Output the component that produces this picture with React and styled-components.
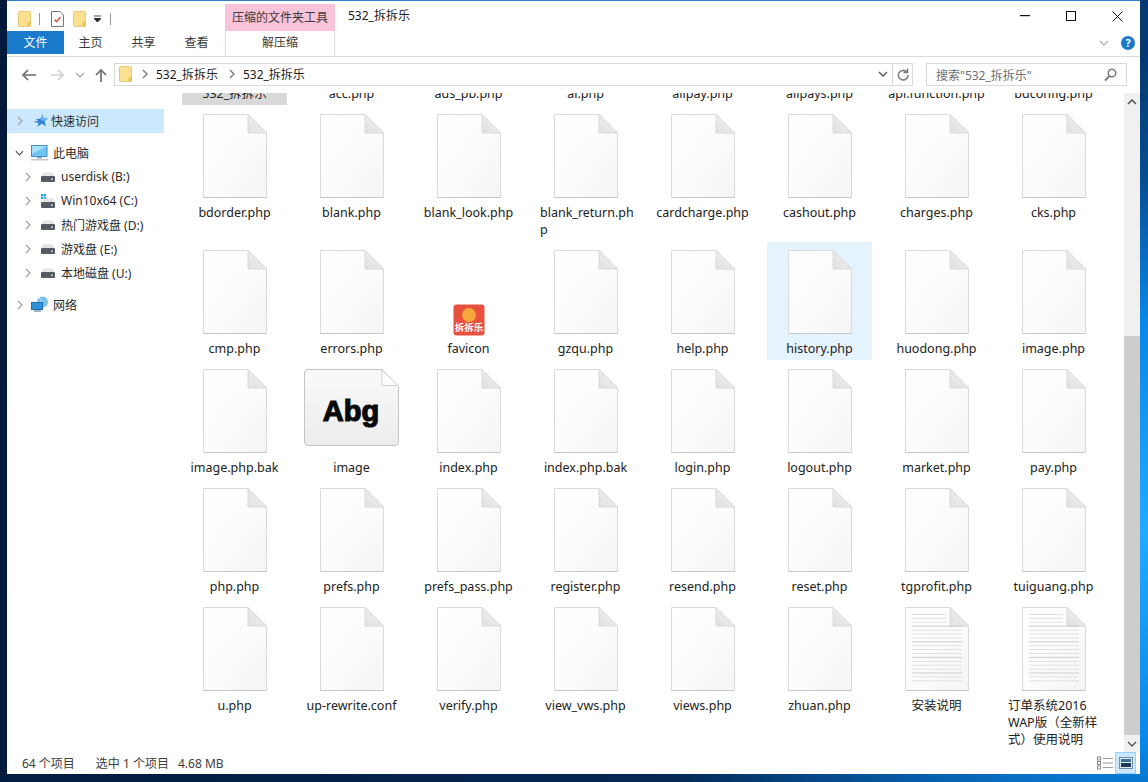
import React from "react";
import styled, { createGlobalStyle } from "styled-components";

const FONT = `"Noto Sans", "Noto Sans CJK SC", sans-serif`;

const Global = createGlobalStyle`
  html, body { margin: 0; padding: 0; width: 1148px; height: 782px; overflow: hidden; }
  * { box-sizing: border-box; }
  body { font-family: ${FONT}; font-size: 12px; color: #1e1e1e; }
`;

const Desktop = styled.div`
  width: 1148px;
  height: 782px;
  padding: 0 8px 8px 7px;
  background:
    radial-gradient(ellipse 560px 470px at 100% 68%, #22aaff 0%, #0a86e6 45%, rgba(6, 80, 150, 0.9) 75%, rgba(4, 40, 80, 0) 100%),
    linear-gradient(100deg, #03193a 0%, #042a55 70%, #06417f 100%);
`;
const Win = styled.div`
  width: 1133px;
  height: 774px;
  background: #fff;
  border-top: 1px solid #2b7cc0;
  display: flex;
  flex-direction: column;
`;
const TitleBar = styled.div`
  height: 30px;
  display: flex;
  align-items: flex-start;
  position: relative;
`;
const Quick = styled.div`
  width: 218px;
  padding: 5px 0 0 11px;
  display: flex;
  align-items: center;
  height: 30px;
`;
const QSep = styled.span`
  width: 1px;
  height: 12px;
  background: #9a9a9a;
  margin: 0 ${(p) => p.$r || 11}px 0 ${(p) => p.$l || 8}px;
`;
const QGap = styled.span`
  width: ${(p) => p.$w}px;
`;
const ContextTitle = styled.div`
  margin-top: 3px;
  width: 110px;
  height: 27px;
  background: #f9c3da;
  color: #3b3b3b;
  font-size: 12px;
  text-align: center;
  line-height: 27px;
`;
const WinTitle = styled.div`
  margin-left: 13px;
  line-height: 30px;
  font-size: 12px;
  flex: 1;
  color: #1a1a1a;
`;
const Caps = styled.div`
  display: flex;
`;
const Cap = styled.div`
  width: 46px;
  height: 30px;
  display: flex;
  align-items: center;
  justify-content: center;
`;
const Tabs = styled.div`
  height: 26px;
  display: flex;
  align-items: flex-start;
  border-bottom: 1px solid #dadbdc;
`;
const FileTab = styled.div`
  width: 57px;
  height: 23px;
  background: #1979ca;
  color: #fff;
  text-align: center;
  line-height: 23px;
`;
const Tab = styled.div`
  width: ${(p) => p.$w}px;
  height: 23px;
  line-height: 23px;
  text-align: center;
  color: #3a3a3a;
`;
const CtxTab = styled.div`
  margin-left: 2px;
  width: 110px;
  height: 25px;
  line-height: 23px;
  text-align: center;
  color: #3a3a3a;
  border-left: 1px solid #dadbdc;
  border-right: 1px solid #dadbdc;
`;
const RibbonRight = styled.div`
  margin-left: auto;
  height: 23px;
  display: flex;
  align-items: center;
  gap: 12px;
  padding-right: 5px;
`;
const HelpDot = styled.div`
  width: 14px;
  height: 14px;
  border-radius: 50%;
  background: #1979ca;
  color: #fff;
  font-weight: 700;
  font-size: 11px;
  line-height: 14px;
  text-align: center;
`;
const NavBar = styled.div`
  height: 36px;
  display: flex;
  align-items: flex-start;
  padding-top: 6px;
`;
const NavButtons = styled.div`
  width: 107px;
  height: 23px;
  padding-left: 13px;
  display: flex;
  align-items: center;
`;
const NavGap = styled.span`
  width: ${(p) => p.$w}px;
`;
const AddressBox = styled.div`
  width: 799px;
  height: 23px;
  border: 1px solid #d9d9d9;
  display: flex;
  align-items: center;
  padding-left: 4px;
  padding-bottom: 1px;
`;
const CrumbSep = styled.span`
  margin-left: ${(p) => p.$l}px;
  display: inline-flex;
  align-items: center;
`;
const Crumb = styled.span`
  margin-left: 8px;
  font-size: 12px;
  color: #1a1a1a;
`;
const AddrEnd = styled.div`
  margin-left: auto;
  display: flex;
  align-items: center;
  height: 21px;
`;
const AddrBtn = styled.div`
  width: ${(p) => p.$w}px;
  height: 21px;
  display: flex;
  align-items: center;
  justify-content: center;
  border-left: ${(p) => (p.$sep ? "1px solid #d9d9d9" : "none")};
`;
const SearchBox = styled.div`
  margin-left: 13px;
  width: 201px;
  height: 23px;
  border: 1px solid #d9d9d9;
  display: flex;
  align-items: center;
  justify-content: space-between;
  padding: 0 9px;
  color: #6d6d6d;
`;
const Body = styled.div`
  flex: 1;
  display: flex;
  min-height: 0;
`;
const Side = styled.div`
  width: 157px;
  flex: none;
  padding-top: 16px;
  display: flex;
  flex-direction: column;
`;
const SideRow = styled.div`
  height: 24px;
  display: flex;
  align-items: center;
  padding-left: ${(p) => p.$indent}px;
  padding-bottom: 1px;
  background: ${(p) => (p.$on ? "#cce8ff" : "transparent")};
  margin-top: ${(p) => p.$mt || 0}px;
  color: #2a2a2a;
  font-size: 12px;
  white-space: nowrap;
`;
const Chev = styled.span`
  width: 9px;
  margin-right: ${(p) => p.$mr}px;
  display: inline-flex;
  justify-content: center;
`;
const SideIcon = styled.span`
  width: ${(p) => p.$w || 16}px;
  height: 16px;
  margin-right: ${(p) => p.$mr || 5}px;
  display: inline-flex;
  align-items: center;
  justify-content: center;
`;
const Main = styled.div`
  flex: 1;
  position: relative;
  overflow: hidden;
  padding-left: 18px;
`;
const Grid = styled.div`
  margin-top: -106px;
  display: grid;
  grid-template-columns: repeat(8, 105px);
  column-gap: 12px;
  row-gap: 1px;
  align-items: start;
`;
const Cell = styled.div`
  min-height: 118px;
  padding: 8px 0 3px;
  display: flex;
  flex-direction: column;
  align-items: center;
  background: ${(p) => (p.$sel === "blue" ? "#e5f3ff" : p.$sel === "gray" ? "#d9d9d9" : "transparent")};
`;
const IconBox = styled.div`
  height: 84px;
  width: 100%;
  display: flex;
  align-items: ${(p) => p.$align || "flex-end"};
  justify-content: center;
`;
const Label = styled.div`
  margin-top: 6px;
  width: 100%;
  font-size: 12.5px;
  line-height: 17px;
  color: #222;
  text-align: ${(p) => (p.$left ? "left" : "center")};
  padding-left: ${(p) => (p.$left ? 7 : 0)}px;
  white-space: nowrap;
`;
const Line = styled.div``;
const ScrollBar = styled.div`
  position: absolute;
  right: 0;
  top: 0;
  bottom: 0;
  width: 16px;
  background: #f0f0f0;
  display: flex;
  flex-direction: column;
`;
const ScrollArrow = styled.div`
  height: 17px;
  display: flex;
  align-items: center;
  justify-content: center;
`;
const ScrollTrack = styled.div`
  flex: 1;
  display: flex;
  flex-direction: column;
  justify-content: flex-end;
`;
const ScrollThumb = styled.div`
  height: 399px;
  background: #cdcdcd;
`;
const Status = styled.div`
  height: 22px;
  flex: none;
  display: flex;
  align-items: center;
  padding-left: 15px;
  color: #3e3e3e;
  font-size: 12px;
`;
const StatusPart = styled.span`
  margin-right: ${(p) => p.$mr}px;
`;
const Views = styled.div`
  margin-left: auto;
  display: flex;
  align-items: center;
  height: 22px;
  padding-right: 4px;
`;
const ViewBtn = styled.div`
  width: 21px;
  height: 22px;
  display: flex;
  align-items: center;
  justify-content: center;
  background: ${(p) => (p.$on ? "#cce8ff" : "transparent")};
  border: ${(p) => (p.$on ? "1px solid #99d1ff" : "none")};
`;

const Folder = () => (
  <svg width="13" height="16" viewBox="0 0 13 16">
    <rect x=".5" y=".5" width="12" height="15" rx="1.2" fill="#fbe08f" stroke="#e6c976" />
    <rect x="9.500" y="11" width="3" height="4.500" fill="#eec256" />
  </svg>
);
const Notes = () => (
  <svg width="13" height="16" viewBox="0 0 13 16">
    <path d="M.5.5h8.500l3.500 3.500v11.500H.5z" fill="#fff" stroke="#777" />
    <path d="M3.500 8.500l2 2.200 4-4.700" fill="none" stroke="#d4562a" strokeWidth="1.400" />
  </svg>
);
const ChevR = ({ c = "#a6a6a6" }) => (
  <svg width="6" height="10" viewBox="0 0 6 10"><path d="M1 1l4 4-4 4" fill="none" stroke={c} strokeWidth="1.300" /></svg>
);
const ChevD = ({ c = "#555" }) => (
  <svg width="10" height="6" viewBox="0 0 10 6"><path d="M1 1l4 4 4-4" fill="none" stroke={c} strokeWidth="1.300" /></svg>
);
const Arrow = ({ dir, c }) => {
  const d = { l: "M16 8H3M8 3L3 8l5 5", r: "M1 8h12M8 3l5 5-5 5", u: "M8 15V3M3 8l5-5 5 5" }[dir];
  return <svg width="16" height="16" viewBox="0 0 16 16"><path d={d} fill="none" stroke={c} strokeWidth="1.700" /></svg>;
};
const Drive = () => (
  <svg width="14" height="10" viewBox="0 0 14 10">
    <path d="M2 0.500h10l2 4H0z" fill="#e4e4e4" />
    <rect y="4" width="14" height="6" rx="1" fill="#555c64" />
    <rect x="10" y="6.500" width="2" height="1.200" fill="#d8e6f0" />
  </svg>
);
const WinDrive = () => (
  <svg width="14" height="14" viewBox="0 0 14 14">
    <rect x="0" y="0" width="2.200" height="2.200" fill="#1ba1e2" /><rect x="2.800" y="0" width="2.200" height="2.200" fill="#1ba1e2" />
    <rect x="0" y="2.800" width="2.200" height="2.200" fill="#1ba1e2" /><rect x="2.800" y="2.800" width="2.200" height="2.200" fill="#1ba1e2" />
    <path d="M2 4.500h10l2 4H0z" fill="#e4e4e4" />
    <rect y="8" width="14" height="6" rx="1" fill="#555c64" />
    <rect x="10" y="10.500" width="2" height="1.200" fill="#d8e6f0" />
  </svg>
);
const Star = () => (
  <svg width="15" height="14" viewBox="0 0 15 14">
    <path d="M9.500.3l1.200 4 4.200.2-3.200 2.800 1.300 5-4.200-2.600-4.500 3 1.200-4L.3 8l4.900-1.500L2.800 5l4.800-.3z" fill="#2f86d6" />
    <path d="M9.500.3l1.200 4 4.200.2-3.200 2.800L8 6z" fill="#6cb4ee" />
  </svg>
);
const Monitor = () => (
  <svg width="17" height="16" viewBox="0 0 17 16">
    <rect x=".5" y=".5" width="15.500" height="11" fill="#6fc6f2" stroke="#3d8fc4" />
    <path d="M1 1h15L1 9z" fill="#a8e0fa" />
    <rect x="6" y="12" width="5" height="1.500" fill="#9aa6ae" />
    <rect x="0" y="14" width="17" height="1.500" fill="#c4ccd2" />
  </svg>
);
const Net = () => (
  <svg width="18" height="17" viewBox="0 0 18 17">
    <circle cx="11.500" cy="6" r="5.500" fill="#7cc0ea" />
    <path d="M8 2q4 3 3 9" stroke="#cfe9f8" fill="none" />
    <rect x="0.500" y="6.500" width="11" height="7" fill="#2f8fd8" stroke="#1e6fb0" />
    <rect x="3" y="14" width="7" height="2" fill="#9fb4c2" />
  </svg>
);

const DocIcon = ({ lines }) => (
  <svg width="64" height="84" viewBox="0 0 64 84">
    <defs>
      <linearGradient id="pg" x1="0" y1="0" x2="1" y2="1">
        <stop offset="0" stopColor="#ffffff" /><stop offset=".5" stopColor="#fbfcfc" /><stop offset="1" stopColor="#f3f5f6" />
      </linearGradient>
      <linearGradient id="fd" x1="0" y1="1" x2="1" y2="0">
        <stop offset="0" stopColor="#e0e0e0" /><stop offset="1" stopColor="#f4f4f4" />
      </linearGradient>
    </defs>
    <path d="M.5.500h44.500l18.500 18.500v64.500H.5z" fill="url(#pg)" stroke="#dadada" />
    <path d="M.5 83.500h63" stroke="#c8c8c8" />
    <path d="M45 .5V19h18.500z" fill="url(#fd)" stroke="#dadada" />
    {lines && Array.from({ length: 18 }).map((_, i) => (
      <rect key={i} x="7" y={7 + i * 3.900} width={i < 3 ? 34 : 50} height="1" fill={i % 4 === 3 ? "#cccccc" : "#e0e0e0"} />
    ))}
  </svg>
);
const FaviconSvg = styled.svg`
  margin-bottom: -2px;
`;
const Favicon = () => (
  <FaviconSvg width="32" height="32" viewBox="0 0 32 32">
    <rect x="0.500" y="0.500" width="31" height="31" rx="3" fill="#e8503f" />
    <circle cx="16" cy="11" r="7" fill="#f6a63a" />
    <text x="16" y="26.500" textAnchor="middle" fontSize="9.500" fontWeight="700" fill="#fff" fontFamily='"Noto Sans CJK SC", sans-serif'>拆拆乐</text>
  </FaviconSvg>
);
const FontThumb = () => (
  <svg width="95" height="78" viewBox="0 0 95 78">
    <defs>
      <linearGradient id="fg" x1="0" y1="0" x2="0" y2="1">
        <stop offset="0" stopColor="#fafafa" /><stop offset="1" stopColor="#ececec" />
      </linearGradient>
    </defs>
    <path d="M4 .5h74l16.500 17V73q0 3.500-3.500 3.500H4Q.5 76.500.5 73V4Q.5.5 4 .5z" fill="url(#fg)" stroke="#c4c4c4" />
    <path d="M78 1v15.500h16z" fill="#fff" stroke="#cfcfcf" />
    <text x="47" y="52" textAnchor="middle" fontSize="29" fontWeight="700" fill="#0a0a0a" fontFamily='"Liberation Sans", sans-serif' stroke="#0a0a0a" strokeWidth="1.200">Abg</text>
  </svg>
);

const rows = [
  ["532_拆拆乐", "acc.php", "ads_pb.php", "ai.php", "alipay.php", "alipays.php", "api.function.php", "bdconfig.php"],
  ["bdorder.php", "blank.php", "blank_look.php", ["blank_return.ph", "p"], "cardcharge.php", "cashout.php", "charges.php", "cks.php"],
  ["cmp.php", "errors.php", "favicon", "gzqu.php", "help.php", "history.php", "huodong.php", "image.php"],
  ["image.php.bak", "image", "index.php", "index.php.bak", "login.php", "logout.php", "market.php", "pay.php"],
  ["php.php", "prefs.php", "prefs_pass.php", "register.php", "resend.php", "reset.php", "tgprofit.php", "tuiguang.php"],
  ["u.php", "up-rewrite.conf", "verify.php", "view_vws.php", "views.php", "zhuan.php", "安装说明", ["订单系统2016", "WAP版（全新样", "式）使用说明"]],
];
const files = rows.flat();

const iconFor = (name) => {
  if (name === "favicon") return <Favicon />;
  if (name === "image") return <FontThumb />;
  if (name === "安装说明" || (Array.isArray(name) && name[0].startsWith("订单"))) return <DocIcon lines />;
  return <DocIcon />;
};

const sel = (n) => (n === "history.php" ? "blue" : n === "532_拆拆乐" ? "gray" : undefined);

const drives = [
  ["userdisk (B:)", <Drive />],
  ["Win10x64 (C:)", <WinDrive />],
  ["热门游戏盘 (D:)", <Drive />],
  ["游戏盘 (E:)", <Drive />],
  ["本地磁盘 (U:)", <Drive />],
];

export default function App() {
  return (
    <Desktop>
      <Global />
      <Win>
        <TitleBar>
          <Quick>
            <Folder />
            <QSep />
            <Notes />
            <QGap $w={9} />
            <Folder />
            <QGap $w={8} />
            <svg width="7" height="8" viewBox="0 0 7 8"><path d="M0 1h7M0 3.500h7L3.500 7z" stroke="#222" fill="#222" strokeWidth=".8" /></svg>
            <QSep $l={9} />
          </Quick>
          <ContextTitle>压缩的文件夹工具</ContextTitle>
          <WinTitle>532_拆拆乐</WinTitle>
          <Caps>
            <Cap>
              <svg width="10" height="2" viewBox="0 0 10 2"><rect width="10" height="1.200" fill="#111" /></svg>
            </Cap>
            <Cap>
              <svg width="10" height="10" viewBox="0 0 10 10"><rect x=".5" y=".5" width="9" height="9" fill="none" stroke="#111" /></svg>
            </Cap>
            <Cap>
              <svg width="11" height="11" viewBox="0 0 11 11"><path d="M.5.5l10 10M10.500.5l-10 10" stroke="#111" /></svg>
            </Cap>
          </Caps>
        </TitleBar>
        <Tabs>
          <FileTab>文件</FileTab>
          <Tab $w={53}>主页</Tab>
          <Tab $w={53}>共享</Tab>
          <Tab $w={53}>查看</Tab>
          <CtxTab>解压缩</CtxTab>
          <RibbonRight>
            <ChevD c="#b0b0b0" />
            <HelpDot>?</HelpDot>
          </RibbonRight>
        </Tabs>
        <NavBar>
          <NavButtons>
            <Arrow dir="l" c="#6e6e6e" />
            <NavGap $w={14} />
            <Arrow dir="r" c="#cfcfcf" />
            <NavGap $w={9} />
            <ChevD c="#a8a8a8" />
            <NavGap $w={8} />
            <Arrow dir="u" c="#6e6e6e" />
          </NavButtons>
          <AddressBox>
            <Folder />
            <CrumbSep $l={10}><ChevR c="#777" /></CrumbSep>
            <Crumb>532_拆拆乐</Crumb>
            <CrumbSep $l={11}><ChevR c="#777" /></CrumbSep>
            <Crumb>532_拆拆乐</Crumb>
            <AddrEnd>
              <AddrBtn $w={19}><ChevD c="#555" /></AddrBtn>
              <AddrBtn $w={20} $sep>
                <svg width="12" height="13" viewBox="0 0 12 13"><path d="M9.800 4A4.800 4.800 0 1 0 11 7M10.500 .5v4h-4" fill="none" stroke="#7a7a7a" strokeWidth="1.500" /></svg>
              </AddrBtn>
            </AddrEnd>
          </AddressBox>
          <SearchBox>
            <span>搜索"532_拆拆乐"</span>
            <svg width="13" height="13" viewBox="0 0 13 13"><circle cx="8" cy="5" r="3.800" fill="none" stroke="#7a7a7a" strokeWidth="1.500" /><path d="M5.500 8L1 12.500" stroke="#7a7a7a" strokeWidth="2" /></svg>
          </SearchBox>
        </NavBar>
        <Body>
          <Side>
            <SideRow $indent={8} $on>
              <Chev $mr={8}><ChevR c="#a6a6a6" /></Chev>
              <SideIcon $mr={3}><Star /></SideIcon>
              快速访问
            </SideRow>
            <SideRow $indent={8} $mt={8}>
              <Chev $mr={7}><ChevD c="#555" /></Chev>
              <SideIcon $w={17} $mr={5}><Monitor /></SideIcon>
              此电脑
            </SideRow>
            {drives.map(([n, ic]) => (
              <SideRow key={n} $indent={16}>
                <Chev $mr={8}><ChevR c="#a6a6a6" /></Chev>
                <SideIcon $mr={5}>{ic}</SideIcon>
                {n}
              </SideRow>
            ))}
            <SideRow $indent={8} $mt={8}>
              <Chev $mr={7}><ChevR c="#a6a6a6" /></Chev>
              <SideIcon $w={18} $mr={4}><Net /></SideIcon>
              网络
            </SideRow>
          </Side>
          <Main>
            <Grid>
              {files.map((f) => {
                const multi = Array.isArray(f);
                return (
                  <Cell key={multi ? f[0] : f} $sel={sel(f)}>
                    <IconBox $align={f === "image" ? "flex-start" : undefined}>{iconFor(f)}</IconBox>
                    <Label $left={multi}>
                      {multi ? f.map((l) => <Line key={l}>{l}</Line>) : f}
                    </Label>
                  </Cell>
                );
              })}
            </Grid>
            <ScrollBar>
              <ScrollArrow>
                <svg width="10" height="6" viewBox="0 0 10 6"><path d="M1 5l4-4 4 4" fill="none" stroke="#505050" strokeWidth="1.500" /></svg>
              </ScrollArrow>
              <ScrollTrack><ScrollThumb /></ScrollTrack>
              <ScrollArrow>
                <ChevD c="#505050" />
              </ScrollArrow>
            </ScrollBar>
          </Main>
        </Body>
        <Status>
          <StatusPart $mr={21}>64 个项目</StatusPart>
          <StatusPart $mr={9}>选中 1 个项目</StatusPart>
          <StatusPart $mr={0}>4.68 MB</StatusPart>
          <Views>
            <ViewBtn>
              <svg width="16" height="14" viewBox="0 0 16 14">
                {[1, 5.500, 10].map((y) => (
                  <g key={y}>
                    <rect x=".5" y={y} width="3" height="3" fill="none" stroke="#8a8a8a" />
                    <rect x="6" y={y + 1} width="10" height="1" fill="#9a9a9a" />
                  </g>
                ))}
              </svg>
            </ViewBtn>
            <ViewBtn $on>
              <svg width="14" height="12" viewBox="0 0 14 12">
                <rect x=".5" y=".5" width="13" height="11" fill="#dfeaf2" stroke="#6f8ea8" />
                <rect x="2" y="2" width="10" height="3" fill="#3a6f9e" />
                <rect x="2" y="6" width="10" height="4" fill="#1e3a56" />
              </svg>
            </ViewBtn>
          </Views>
        </Status>
      </Win>
    </Desktop>
  );
}
